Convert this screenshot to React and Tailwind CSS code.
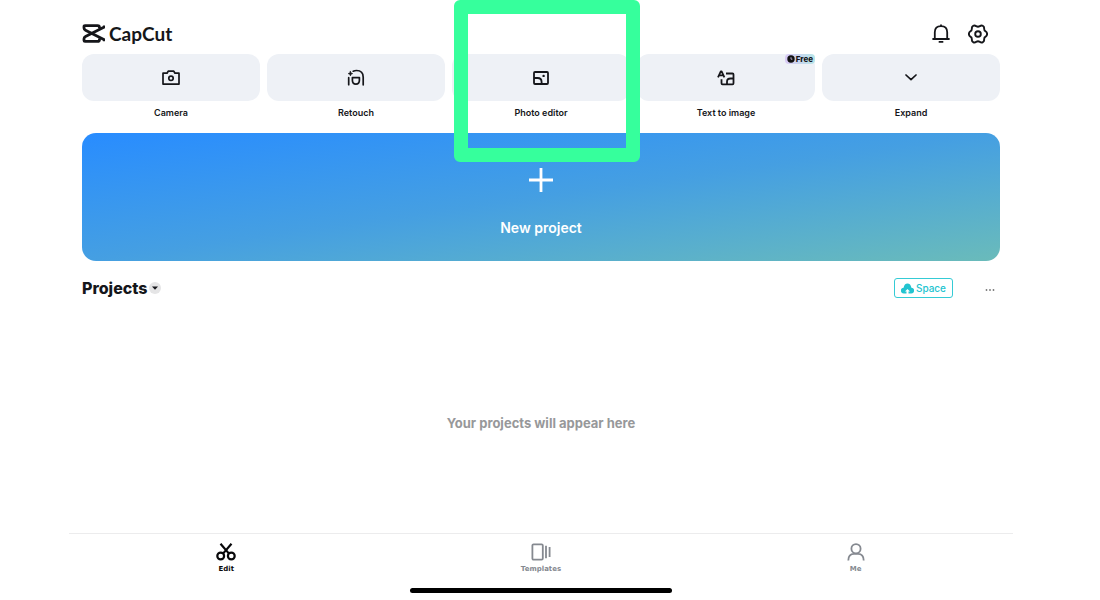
import { useState } from 'react';

const Logo = () => (
  <svg width="23" height="19" viewBox="0 0 23 19" fill="none" stroke="#15161a" strokeWidth="2.8" strokeLinejoin="round">
    <path d="M22.300 1.500V3L3.500 12.600Q2 13.400 2 14.800v1.600q0 1 1 1h12.500q2 0 2-2v-.8" />
    <path d="M22.300 17.200v-1.500L3.500 6.200Q2 5.400 2 4V2.600q0-1 1-1h12.500q2 0 2 2v.8" />
  </svg>
);

const CameraIcon = () => (
  <svg width="18" height="16" viewBox="0 0 18 16" fill="none" stroke="currentColor" strokeWidth="1.700" strokeLinejoin="round">
    <path d="M1 3.200h4L6.200 1.200h5.600L13 3.200h4v10.900H1z" />
    <circle cx="9" cy="8.300" r="2.200" />
  </svg>
);

const RetouchIcon = () => (
  <svg width="18" height="18" viewBox="0 0 18 18" fill="none" stroke="currentColor" strokeWidth="1.700" strokeLinecap="round">
    <path d="M6.200 2.200Q7.700 1.500 9.500 1.500c4.200 0 6.700 2.700 6.700 6.700v7.600M1.700 8.700v7" />
    <path d="M5.400 8.600h7v2.700c0 5.200-7 5.200-7 0z" strokeLinejoin="round" />
    <path d="m3.400 2.300.7 1.600 1.600.7-1.600.7-.7 1.600-.7-1.600-1.600-.7 1.600-.7z" fill="currentColor" strokeWidth=".6" strokeLinejoin="round" />
  </svg>
);

const PhotoIcon = () => (
  <svg width="16" height="14" viewBox="0 0 16 14" fill="none" stroke="currentColor" strokeWidth="1.800">
    <rect x="1" y="1" width="14" height="12" rx="1" />
    <path d="M1 7h3.600c2.600 0 4 1.500 4 4v2" />
    <circle cx="10.600" cy="4.900" r="1.200" fill="currentColor" stroke="none" />
  </svg>
);

const TextImageIcon = () => (
  <svg width="18" height="16" viewBox="0 0 18 16" fill="none" stroke="currentColor" strokeWidth="1.800" strokeLinejoin="round">
    <path d="m1 7.300 2.800-6h.8l2.800 6M2.200 5.400h4M9 3.500h6.500q1 0 1 1v8.800q0 1-1 1h-10q-1 0-1-1V9.200" />
    <path d="M16.500 8.500h-3c-2.300 0-3.500 1.200-3.500 3.300v2.500" />
  </svg>
);

const ChevronIcon = () => (
  <svg width="12" height="7" viewBox="0 0 12 7" fill="none" stroke="currentColor" strokeWidth="1.700" strokeLinecap="round" strokeLinejoin="round">
    <path d="m1 1 5 4.700L11 1" />
  </svg>
);

const BellIcon = () => (
  <svg width="18" height="19" viewBox="0 0 18 19" fill="none" stroke="currentColor" strokeWidth="1.800">
    <path d="M2.800 15V8.300C2.800 4.500 5.300 2.200 9 2.200s6.200 2.300 6.200 6.100V15M.4 15h17.200M6.700 17.900h4.600M9 .5v2" />
  </svg>
);

const GearIcon = () => (
  <svg width="20" height="20" viewBox="0 0 20 20" fill="none" stroke="currentColor" strokeWidth="1.900" strokeLinejoin="round">
    <path d="M8.200 2.200Q10 3.200 11.800 2.200q1.600-1.300 3-.4 1.600.9 1.300 2.800 0 2 1.500 2.700 1.500.9 1.500 2.700t-1.500 2.700q-1.500.7-1.500 2.700.3 1.900-1.300 2.800-1.400.9-3-.4-1.800-1-3.600 0-1.600 1.300-3 .4-1.600-.9-1.300-2.800 0-2-1.500-2.700Q.9 11.800.9 10t1.500-2.700q1.500-.7 1.500-2.700-.3-1.900 1.300-2.800 1.400-.9 3 .4z" />
    <circle cx="10" cy="10" r="2.800" />
  </svg>
);

const ScissorsIcon = () => (
  <svg width="20" height="18" viewBox="0 0 20 18" fill="none" stroke="currentColor" strokeWidth="2.200">
    <circle cx="4.700" cy="13" r="3.400" />
    <circle cx="15.300" cy="13" r="3.400" />
    <path d="M4.500.7 13 10.600M15.500.7 7 10.600" />
  </svg>
);

const TemplatesIcon = () => (
  <svg width="20" height="18" viewBox="0 0 20 18" fill="none" stroke="currentColor" strokeWidth="1.800">
    <rect x="1.400" y="1.400" width="10.400" height="15.200" rx="1.200" />
    <path d="M15 2.800v12.400M18.600 4v10" />
  </svg>
);

const UserIcon = () => (
  <svg width="18" height="18" viewBox="0 0 18 18" fill="none" stroke="currentColor" strokeWidth="1.800">
    <circle cx="9" cy="5.700" r="4.600" />
    <path d="M1.300 17.500c0-4.500 2.500-6.700 5.700-6.700h4c3.200 0 5.700 2.200 5.700 6.700" />
  </svg>
);

const tools = [
  { label: 'Camera', icon: CameraIcon },
  { label: 'Retouch', icon: RetouchIcon },
  { label: 'Photo editor', icon: PhotoIcon, highlighted: true },
  { label: 'Text to image', icon: TextImageIcon, free: true },
  { label: 'Expand', icon: ChevronIcon },
];

const tabs = [
  { label: 'Edit', icon: ScissorsIcon },
  { label: 'Templates', icon: TemplatesIcon },
  { label: 'Me', icon: UserIcon },
];

export default function App() {
  const [activeTab, setActiveTab] = useState('Edit');

  return (
    <div className="flex min-h-screen flex-col bg-white pl-[69px] pr-[87px] font-['Inter',sans-serif] text-[#15161a]">
      <header className="flex h-[54px] items-center justify-between px-[13px] pt-[13px]">
        <div className="flex items-center gap-1">
          <Logo />
          <h1 className="font-['Lato',sans-serif] text-[19px] leading-5 font-bold">CapCut</h1>
        </div>
        <div className="flex items-center gap-[18px] pr-3">
          <button aria-label="Notifications"><BellIcon /></button>
          <button aria-label="Settings"><GearIcon /></button>
        </div>
      </header>

      <main className="flex grow flex-col px-[13px]">
        {/* Tools */}
        <div className="grid grid-cols-5 gap-[7px]">
          {tools.map(({ label, icon: Icon, highlighted, free }) => (
            <div key={label} className="relative">
              <button className="flex w-full flex-col items-center gap-[6px]">
                <span className="flex h-[47px] w-full items-center justify-center rounded-xl bg-[#eef1f6]">
                  <Icon />
                </span>
                <span className="text-[9px] leading-3 font-semibold">{label}</span>
              </button>
              {free && (
                <span className="absolute top-0 right-0 flex h-[10px] items-center gap-px rounded-sm bg-linear-to-r from-[#d9c9f5] to-[#b5e5e8] px-[2px] text-[8px] leading-none font-extrabold">
                  <svg width="8" height="8" viewBox="0 0 8 8">
                    <circle cx="4" cy="4" r="3.700" fill="#111" />
                    <path d="M4 2.200v2h1.400" fill="none" stroke="#d9c9f5" strokeWidth=".8" />
                  </svg>
                  Free
                </span>
              )}
              {highlighted && (
                <div className="pointer-events-none absolute -top-[54px] left-[2px] z-10 h-[162px] w-[186px] rounded-md border-14 border-[#36ff9c]"></div>
              )}
            </div>
          ))}
        </div>

        {/* New project */}
        <button className="mt-[14px] flex h-32 flex-col items-center rounded-[14px] bg-linear-to-br from-[#288cff] via-[#459fe2] to-[#6abbba] pt-[35px] text-white">
          <svg width="24" height="24" viewBox="0 0 24 24" stroke="currentColor" strokeWidth="2.800">
            <path d="M12 0v24M0 12h24" />
          </svg>
          <span className="mt-[26px] text-sm leading-5 font-semibold">New project</span>
        </button>

        {/* Projects */}
        <div className="mt-4 flex h-[22px] items-center justify-between">
          <div className="flex items-center gap-[2px]">
            <h2 className="text-base leading-6 font-extrabold">Projects</h2>
            <button aria-label="Switch list" className="flex size-3 items-center justify-center rounded-full bg-[#e5e5e6]">
              <svg width="6" height="4" viewBox="0 0 6 4"><path d="M0 .5h6L3 3.800z" fill="currentColor" /></svg>
            </button>
          </div>
          <div className="flex items-center gap-8 pr-[5px]">
            <button className="flex h-5 items-center gap-[2px] rounded-[3px] border border-[#35cbd5] px-[6px] text-[10px] leading-none font-medium text-[#22c4d0]">
              <svg width="13" height="11" viewBox="0 0 13 11" fill="currentColor">
                <path d="M3 10.500A2.900 2.900 0 0 1 2.600 4.700C3 2 4.500.5 6.500.5S10 2 10.400 4.700a2.900 2.900 0 0 1-.4 5.800H7.500V8.500H9L6.500 6 4 8.500h1.500v2z" />
              </svg>
              Space
            </button>
            <button aria-label="More options" className="pt-1 text-[#777]">
              <svg width="10" height="2" viewBox="0 0 10 2" fill="currentColor">
                <circle cx="1.500" cy="1" r=".9" />
                <circle cx="5" cy="1" r=".9" />
                <circle cx="8.500" cy="1" r=".9" />
              </svg>
            </button>
          </div>
        </div>

        <div className="flex grow items-center justify-center pt-[14px]">
          <p className="text-[13px] leading-5 font-bold text-[#97989a]">Your projects will appear here</p>
        </div>
      </main>

      {/* Bottom tabs */}
      <nav className="grid h-[55px] grid-cols-3 border-t border-[#ececed] pt-[9px]">
        {tabs.map(({ label, icon: Icon }) => (
          <button
            key={label}
            onClick={() => setActiveTab(label)}
            className={`flex flex-col items-center gap-[2px] ${activeTab === label ? 'text-[#08080a]' : 'text-[#858990]'}`}
          >
            <Icon />
            <span className="font-['DejaVu_Sans',sans-serif] text-[7px] leading-3 font-bold">{label}</span>
          </button>
        ))}
      </nav>
      <div className="mx-auto mb-[7px] h-[5px] w-[262px] rounded-full bg-black"></div>
    </div>
  );
}
